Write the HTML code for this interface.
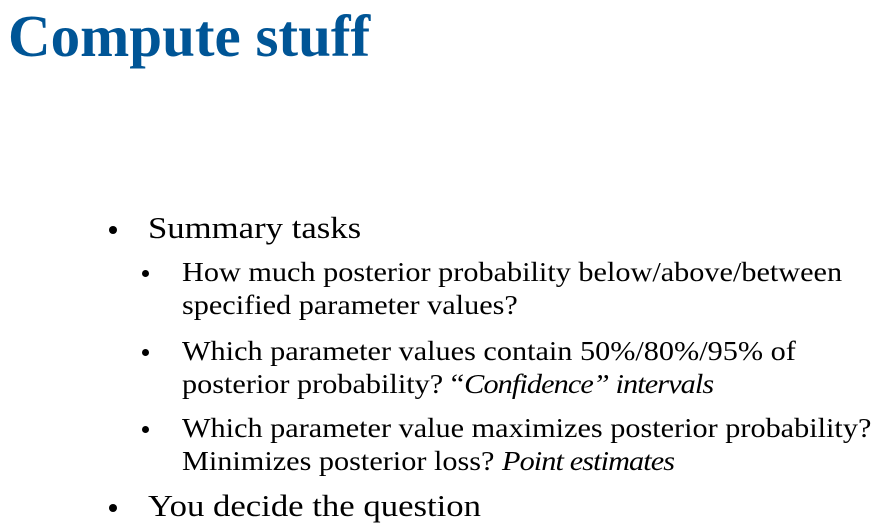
<!DOCTYPE html>
<html><head><style>
body{margin:0;width:878px;height:532px;background:#fff;position:relative;overflow:hidden;font-family:"Liberation Serif",serif;color:#000}
.t{position:absolute;white-space:nowrap;line-height:1;transform-origin:0 0;transform:scaleX(1.12)}
i{letter-spacing:-0.8px}
h1{position:absolute;left:8px;top:7px;margin:0;font-size:59px;color:#005596;font-weight:bold;line-height:1;white-space:nowrap}
.b{position:absolute;width:8px;height:8px;border-radius:50%;background:#000}
.l1{font-size:31px}
.l2{font-size:27px}
</style></head><body>
<h1>Compute stuff</h1>
<div class="b" style="left:109px;top:226px"></div>
<div class="t l1" style="left:148px;top:212px">Summary tasks</div>
<div class="b" style="left:142px;top:270px;width:7px;height:7px"></div>
<div class="t l2" style="left:182px;top:259px">How much posterior probability below/above/between</div>
<div class="t l2" style="left:182px;top:292px">specified parameter values?</div>
<div class="b" style="left:142px;top:349px;width:7px;height:7px"></div>
<div class="t l2" style="left:182px;top:338px">Which parameter values contain 50%/80%/95% of</div>
<div class="t l2" style="left:182px;top:371px">posterior probability? “<i>Confidence” intervals</i></div>
<div class="b" style="left:142px;top:426px;width:7px;height:7px"></div>
<div class="t l2" style="left:182px;top:415px">Which parameter value maximizes posterior probability?</div>
<div class="t l2" style="left:182px;top:448px">Minimizes posterior loss? <i>Point estimates</i></div>
<div class="b" style="left:109px;top:504px"></div>
<div class="t l1" style="left:148px;top:490px">You decide the question</div>
</body></html>
